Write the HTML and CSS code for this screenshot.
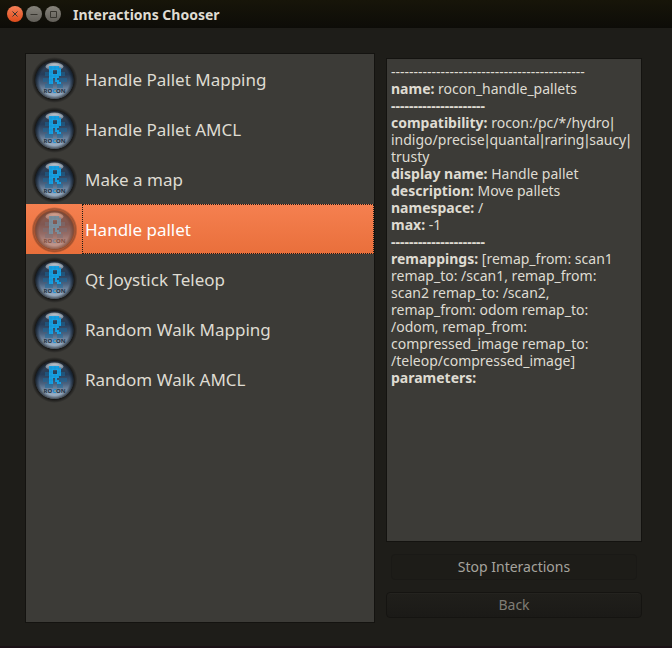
FILE: index.html
```html
<!DOCTYPE html>
<html lang="en">
<head>
<meta charset="utf-8">
<title>Interactions Chooser</title>
<link rel="stylesheet" href="styles.css">
</head>
<body>
<svg class="defs" aria-hidden="true">
  <defs>
    <linearGradient id="ball" x1="0" y1="0" x2="0" y2="1">
      <stop offset="0" stop-color="#3b4654"/>
      <stop offset=".35" stop-color="#263d59"/>
      <stop offset=".6" stop-color="#4a627f"/>
      <stop offset=".8" stop-color="#8298b0"/>
      <stop offset="1" stop-color="#b5c9dd"/>
    </linearGradient>
    <linearGradient id="shine" x1="0" y1="0" x2="0" y2="1">
      <stop offset="0" stop-color="#eaf1f7"/>
      <stop offset="1" stop-color="#8da3b8" stop-opacity=".4"/>
    </linearGradient>
    <radialGradient id="shade">
      <stop offset=".8" stop-color="#0c0c0c" stop-opacity=".95"/>
      <stop offset="1" stop-color="#0c0c0c" stop-opacity="0"/>
    </radialGradient>
    <radialGradient id="rim">
      <stop offset=".8" stop-color="#0b0e12" stop-opacity="0"/>
      <stop offset="1" stop-color="#0b0e12" stop-opacity=".7"/>
    </radialGradient>
    <symbol id="rocon" viewBox="0 0 48 48">
      <circle cx="24.5" cy="24" r="23" fill="url(#shade)"/>
      <circle cx="24.5" cy="24" r="19" fill="url(#ball)"/>
      <ellipse cx="24.5" cy="10.5" rx="9" ry="4" fill="url(#shine)"/>
      <path d="M15 16h4v4h-4zM13 22h6v4h-6zM17 26h6v6h-6zM31 16h4v4h-4zM29 22h8v4h-8zM27 28h6v4h-6zM15 28h4v4h-4z" fill="#176ba0" opacity=".5"/>
      <path d="M19 10h10v2h2v8h-2v2h-2v2h2v2h2v2h-4v-2h-2v-4h-2v6h-4zM23 14v4h4v-4z" fill="#16a2e6" fill-rule="evenodd"/>
      <path d="M19 12h12M19 16h12M19 20h12M19 24h12M21 10v18M25 10v16M29 10v18" stroke="#175b8c" stroke-width=".4" opacity=".4"/>
      <circle cx="24.5" cy="24" r="19" fill="url(#rim)"/>
      <text x="24.5" y="37" text-anchor="middle" class="ball-text">RO<tspan class="ball-mark">C</tspan>ON</text>
    </symbol>
  </defs>
</svg>
<div class="window">
  <header class="titlebar">
    <button class="control close" aria-label="Close"><svg viewBox="0 0 16 16"><path d="M5.5 5.5l5 5M10.5 5.5l-5 5"/></svg></button>
    <button class="control" aria-label="Minimize"><svg viewBox="0 0 16 16"><path d="M4.5 8.5h7"/></svg></button>
    <button class="control" aria-label="Maximize"><svg viewBox="0 0 16 16"><path d="M5.5 5.5h6v6h-6z"/></svg></button>
    <h1>Interactions Chooser</h1>
  </header>
  <main class="content">
    <ul class="list panel">
      <li><button class="item"><svg class="icon"><use href="#rocon"/></svg><span class="label">Handle Pallet Mapping</span></button></li>
      <li><button class="item"><svg class="icon"><use href="#rocon"/></svg><span class="label">Handle Pallet AMCL</span></button></li>
      <li><button class="item"><svg class="icon"><use href="#rocon"/></svg><span class="label">Make a map</span></button></li>
      <li><button class="item selected" aria-current="true"><svg class="icon" viewBox="0 0 48 48"><use href="#rocon"/><circle cx="24.5" cy="24" r="21" class="tint"/></svg><span class="label">Handle pallet</span></button></li>
      <li><button class="item"><svg class="icon"><use href="#rocon"/></svg><span class="label">Qt Joystick Teleop</span></button></li>
      <li><button class="item"><svg class="icon"><use href="#rocon"/></svg><span class="label">Random Walk Mapping</span></button></li>
      <li><button class="item"><svg class="icon"><use href="#rocon"/></svg><span class="label">Random Walk AMCL</span></button></li>
    </ul>
    <div class="side">
      <div class="details panel">
        <p>-------------------------------------------</p>
        <p><b>name:</b> rocon_handle_pallets</p>
        <p><b>---------------------</b></p>
        <p><b>compatibility:</b> rocon:/pc/*/hydro<span class="bar">|</span><br>indigo/precise<span class="bar">|</span>quantal<span class="bar">|</span>raring<span class="bar">|</span>saucy<span class="bar">|</span><br>trusty</p>
        <p><b>display name:</b> Handle pallet</p>
        <p><b>description:</b> Move pallets</p>
        <p><b>namespace:</b> /</p>
        <p><b>max:</b> -1</p>
        <p><b>---------------------</b></p>
        <p><b>remappings:</b> [remap_from: scan1<br>remap_to: /scan1, remap_from:<br>scan2 remap_to: /scan2,<br>remap_from: odom remap_to:<br>/odom, remap_from:<br>compressed_image remap_to:<br>/teleop/compressed_image]</p>
        <p><b>parameters:</b></p>
      </div>
      <button class="action stop">Stop Interactions</button>
      <button class="action back">Back</button>
    </div>
  </main>
</div>
</body>
</html>
```
FILE: styles.css
```css
* {
  box-sizing: border-box;
}

body {
  margin: 0;
  background: #1e1d19;
  color: #dfdbd2;
  font: 14px/17px "Noto Sans", "Open Sans", sans-serif;
}

button {
  font: inherit;
  color: inherit;
}

.defs {
  position: absolute;
  width: 0;
  height: 0;
}

.window {
  display: flex;
  flex-direction: column;
  min-height: 100vh;
  border-bottom: 2px solid #1b1216;
}

.titlebar {
  display: flex;
  align-items: center;
  gap: 3px;
  height: 28px;
  padding: 0 7px;
  background: linear-gradient(#171509, #0d0c08);
}

.titlebar h1 {
  margin: 0 0 0 9px;
  font-size: 14px;
  font-weight: 700;
}

.control {
  width: 16px;
  height: 16px;
  padding: 0;
  border: 0;
  border-radius: 50%;
  background: linear-gradient(#86837b, #625f59);
}

.control.close {
  background: linear-gradient(#f58158, #dd4b1b);
}

.control svg {
  display: block;
  fill: none;
  stroke: #37352f;
}

.content {
  flex: 1;
  display: grid;
  grid-template-columns: minmax(0, 350fr) minmax(0, 256fr);
  gap: 11px;
  padding: 25px 30px 23px 25px;
}

.panel {
  margin: 0;
  border: 1px solid #141310;
  background: #3c3b37;
}

.list {
  padding: 0;
  list-style: none;
}

.item {
  display: flex;
  width: 100%;
  height: 50px;
  padding: 0;
  border: 0;
  background: none;
  font-size: 17px;
  text-align: left;
}

.icon {
  flex: none;
  width: 48px;
  height: 48px;
  margin: 2px 4px 0;
}

.label {
  flex: 1;
  align-self: stretch;
  padding: 0 2px;
  border: 1px solid transparent;
  line-height: 50px;
}

.selected {
  background: linear-gradient(#f58050, #e96f3b);
  color: #fff;
}

.selected .label {
  border: 1px dotted #1e1d19;
}

.tint {
  fill: #f07746;
  opacity: .45;
}

.ball-text {
  font: 700 6px "Noto Sans", sans-serif;
  fill: #263443;
}

.ball-mark {
  fill: #0a8fdc;
}

.side {
  display: flex;
  flex-direction: column;
  padding: 5px 0;
}

.details {
  flex: 1;
  margin-bottom: 12px;
  padding: 4px;
}

.details p {
  margin: 0;
}

.bar {
  font-family: "DejaVu Sans", sans-serif;
  line-height: 1;
}

.action {
  height: 26px;
  padding: 0 0 2px;
  border: 1px solid #1a1916;
  border-radius: 4px;
  background: #1d1c18;
}

.stop {
  margin: 0 5px 12px;
  color: #a5a39d;
}

.back {
  border-color: #151411;
  background: linear-gradient(#201f1b, #1b1a17);
  box-shadow: inset 0 1px #24231f;
  color: #7f7c75;
}
```
